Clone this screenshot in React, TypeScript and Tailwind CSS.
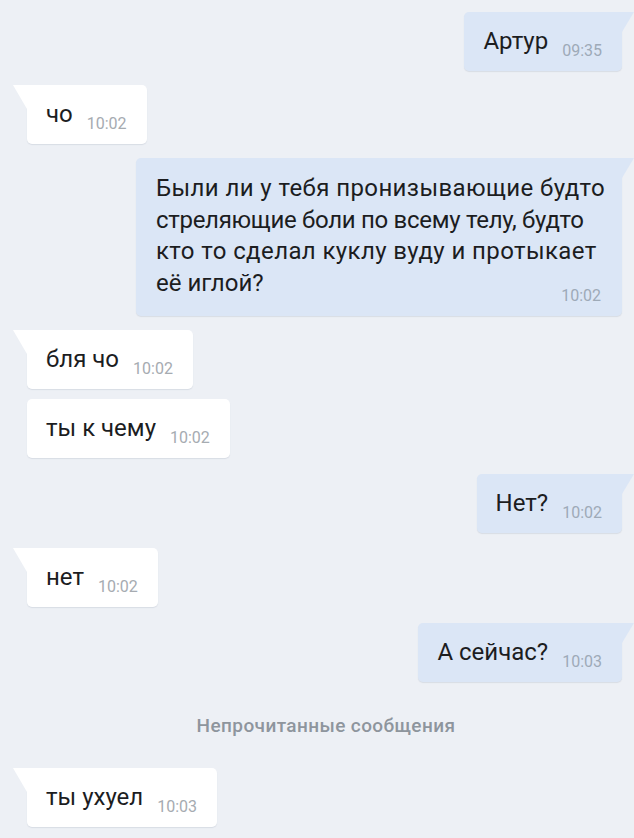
import React from "react";

type Msg = {
	id: number;
	out: boolean;
	text: string;
	time: string;
	tail: boolean;
	mt: string;
};

const top: Msg[] = [
	{ id: 1, out: true, text: "Артур", time: "09:35", tail: true, mt: "mt-[12px]" },
	{ id: 2, out: false, text: "чо", time: "10:02", tail: true, mt: "mt-[14px]" },
];

const rest: Msg[] = [
	{ id: 4, out: false, text: "бля чо", time: "10:02", tail: true, mt: "mt-[14px]" },
	{ id: 5, out: false, text: "ты к чему", time: "10:02", tail: false, mt: "mt-[10px]" },
	{ id: 6, out: true, text: "Нет?", time: "10:02", tail: true, mt: "mt-[16px]" },
	{ id: 7, out: false, text: "нет", time: "10:02", tail: true, mt: "mt-[15px]" },
	{ id: 8, out: true, text: "А сейчас?", time: "10:03", tail: true, mt: "mt-[16px]" },
];

function Tail({ out }: { out: boolean }) {
	if (out) {
		return (
			<svg className="absolute top-0 right-[-12px]" width="12" height="20" viewBox="0 0 12 20">
				<path d="M0 0 L12 0 L0 20 Z" fill="#dbe6f6" />
			</svg>
		);
	}
	return (
		<svg className="absolute top-0 left-[-14px]" width="14" height="24" viewBox="0 0 14 24">
			<path d="M0 0 L14 0 L14 24 Z" fill="#ffffff" />
		</svg>
	);
}

function Bubble({ m }: { m: Msg }) {
	return (
		<div className={`flex ${m.out ? "justify-end" : "justify-start"} ${m.mt}`}>
			<div
				className={`relative flex items-end gap-[14px] h-[59px] pl-[19px] pr-[20px] pt-[16px] pb-[16px] rounded-[5px] shadow-[0_1px_1px_rgba(60,80,110,0.12)] ${
					m.out ? "bg-[#dbe6f6]" : "bg-white"
				} ${m.tail ? (m.out ? "rounded-tr-none" : "rounded-tl-none") : ""}`}
			>
				{m.tail && <Tail out={m.out} />}
				<span className="text-[24px] leading-[28px] text-[#1c1d1f] whitespace-nowrap">{m.text}</span>
				<span
					className={`text-[16px] leading-[16px] translate-y-[4px] ${
						m.out ? "text-[#9eaab8]" : "text-[#a6abb1]"
					}`}
				>
					{m.time}
				</span>
			</div>
		</div>
	);
}

export default function App() {
	return (
		<div className="min-h-[838px] w-full bg-[#edf0f5] font-['Roboto',sans-serif] pl-[27px] pr-[12px] pb-[10px] overflow-hidden">
			{top.map((m) => (
				<Bubble key={m.id} m={m} />
			))}

			{/* long outgoing */}
			<div className="flex justify-end mt-[14px]">
				<div className="relative w-[486px] pl-[20px] pr-[20px] pt-[15px] pb-[12px] bg-[#dbe6f6] rounded-[5px] rounded-tr-none shadow-[0_1px_1px_rgba(60,80,110,0.12)]">
					<Tail out />
					<p className="text-[24px] leading-[31.5px] text-[#1c1d1f] whitespace-nowrap">
						<span className="tracking-[0.4px]">Были ли у тебя пронизывающие будто</span>
						<br />
						<span className="tracking-[-0.3px]">стреляющие боли по всему телу, будто</span>
						<br />
						<span className="tracking-[0.4px]">кто то сделал куклу вуду и протыкает</span>
						<br />
						<span>её иглой?</span>
					</p>
					<div className="flex justify-end mt-[-11px] pr-[1px]">
						<span className="text-[16px] leading-[16px] text-[#9eaab8]">10:02</span>
					</div>
				</div>
			</div>

			{rest.map((m) => (
				<Bubble key={m.id} m={m} />
			))}

			{/* unread divider */}
			<div className="flex justify-center mt-[32px] mr-[-12px] ml-[-9px]">
				<span className="text-[19px] leading-[24px] font-medium tracking-[0.4px] text-[#8e959d]">
					Непрочитанные сообщения
				</span>
			</div>

			<Bubble m={{ id: 9, out: false, text: "ты ухуел", time: "10:03", tail: true, mt: "mt-[30px]" }} />
		</div>
	);
}
